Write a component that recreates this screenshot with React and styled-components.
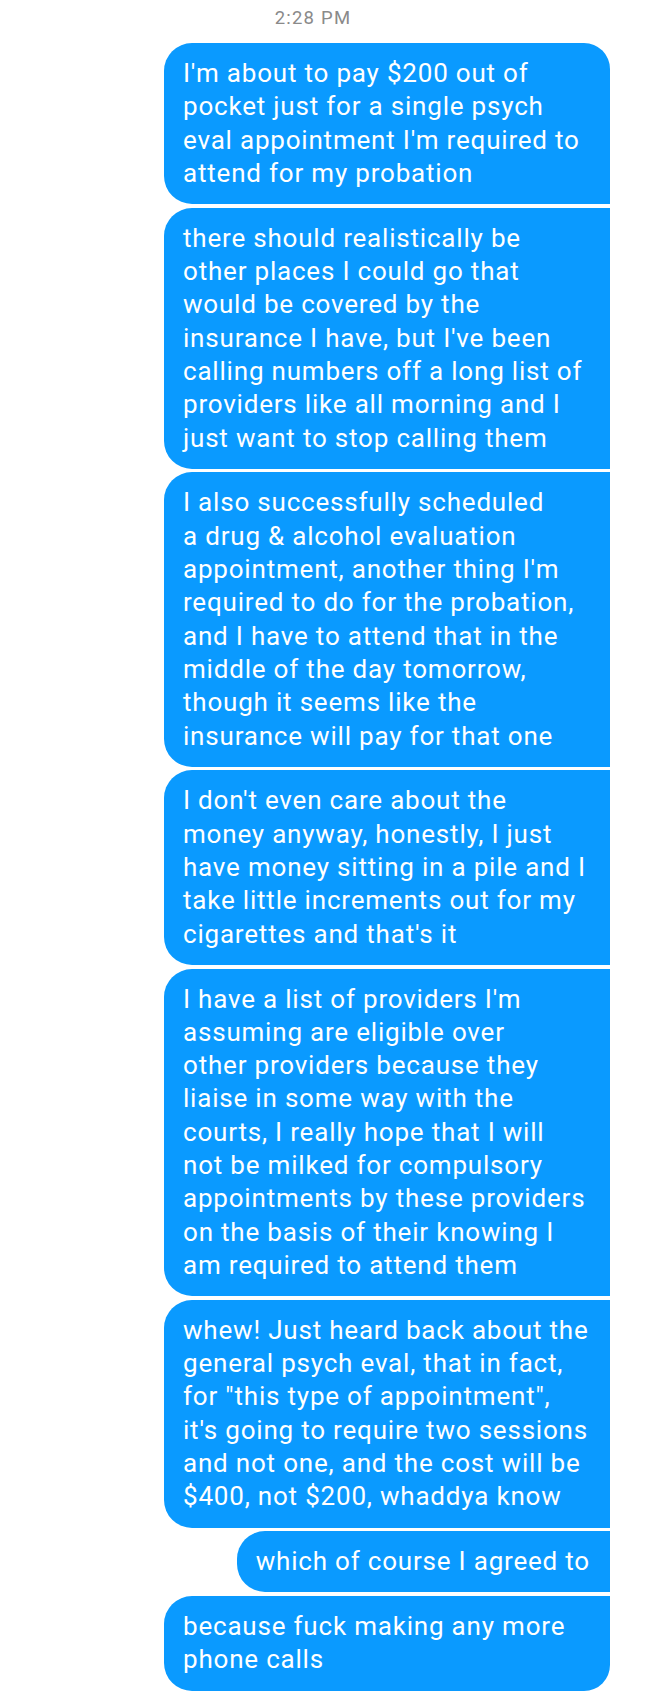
import React from 'react';
import styled, { createGlobalStyle } from 'styled-components';

const GlobalStyle = createGlobalStyle`
  html, body {
    margin: 0;
    padding: 0;
    background: #ffffff;
  }
  body {
    font-family: Roboto, 'Noto Sans', 'Liberation Sans', sans-serif;
    -webkit-font-smoothing: antialiased;
  }
`;

const Thread = styled.div`
  width: 648px;
  min-height: 1697px;
  box-sizing: border-box;
  padding: 7px 38px 0 0;
  display: flex;
  flex-direction: column;
  align-items: flex-end;
  background: #fff;
`;

const Timestamp = styled.div`
  align-self: stretch;
  text-align: center;
  margin-right: -38px;
  padding-right: 22px;
  font-size: 18.5px;
  letter-spacing: 1.2px;
  line-height: 22px;
  color: #8a8a8a;
  margin-bottom: 14px;
`;

const Bubbles = styled.div`
  display: flex;
  flex-direction: column;
  align-items: flex-end;
  gap: 3.6px;
`;

const Bubble = styled.div`
  max-width: 446px;
  box-sizing: border-box;
  padding: 14px 20px 14px 19px;
  background: #0a9aff;
  color: #ffffff;
  font-size: 26px;
  letter-spacing: 0.8px;
  line-height: 33.3px;
  white-space: nowrap;
  border-radius: ${({ $first, $last }) =>
    `28px ${$first ? '26px' : '0'} ${$last ? '26px' : '0'} 28px`};
  width: ${({ $short }) => ($short ? 'auto' : '446px')};
`;

const messages = [
  [
    "I'm about to pay $200 out of",
    'pocket just for a single psych',
    "eval appointment I'm required to",
    'attend for my probation',
  ],
  [
    'there should realistically be',
    'other places I could go that',
    'would be covered by the',
    "insurance I have, but I've been",
    'calling numbers off a long list of',
    'providers like all morning and I',
    'just want to stop calling them',
  ],
  [
    'I also successfully scheduled',
    'a drug & alcohol evaluation',
    "appointment, another thing I'm",
    'required to do for the probation,',
    'and I have to attend that in the',
    'middle of the day tomorrow,',
    'though it seems like the',
    'insurance will pay for that one',
  ],
  [
    "I don't even care about the",
    'money anyway, honestly, I just',
    'have money sitting in a pile and I',
    'take little increments out for my',
    "cigarettes and that's it",
  ],
  [
    "I have a list of providers I'm",
    'assuming are eligible over',
    'other providers because they',
    'liaise in some way with the',
    'courts, I really hope that I will',
    'not be milked for compulsory',
    'appointments by these providers',
    'on the basis of their knowing I',
    'am required to attend them',
  ],
  [
    'whew! Just heard back about the',
    'general psych eval, that in fact,',
    'for "this type of appointment",',
    "it's going to require two sessions",
    'and not one, and the cost will be',
    '$400, not $200, whaddya know',
  ],
  ['which of course I agreed to'],
  ['because fuck making any more', 'phone calls'],
];

const App = () => {
  return (
    <>
      <GlobalStyle />
      <Thread>
        <Timestamp>2:28 PM</Timestamp>
        <Bubbles>
          {messages.map((lines, i) => (
            <Bubble
              key={i}
              $first={i === 0}
              $last={i === messages.length - 1}
              $short={lines.length === 1}
            >
              {lines.map((line, j) => (
                <React.Fragment key={j}>
                  {j > 0 && <br />}
                  {line}
                </React.Fragment>
              ))}
            </Bubble>
          ))}
        </Bubbles>
      </Thread>
    </>
  );
};

export default App;
